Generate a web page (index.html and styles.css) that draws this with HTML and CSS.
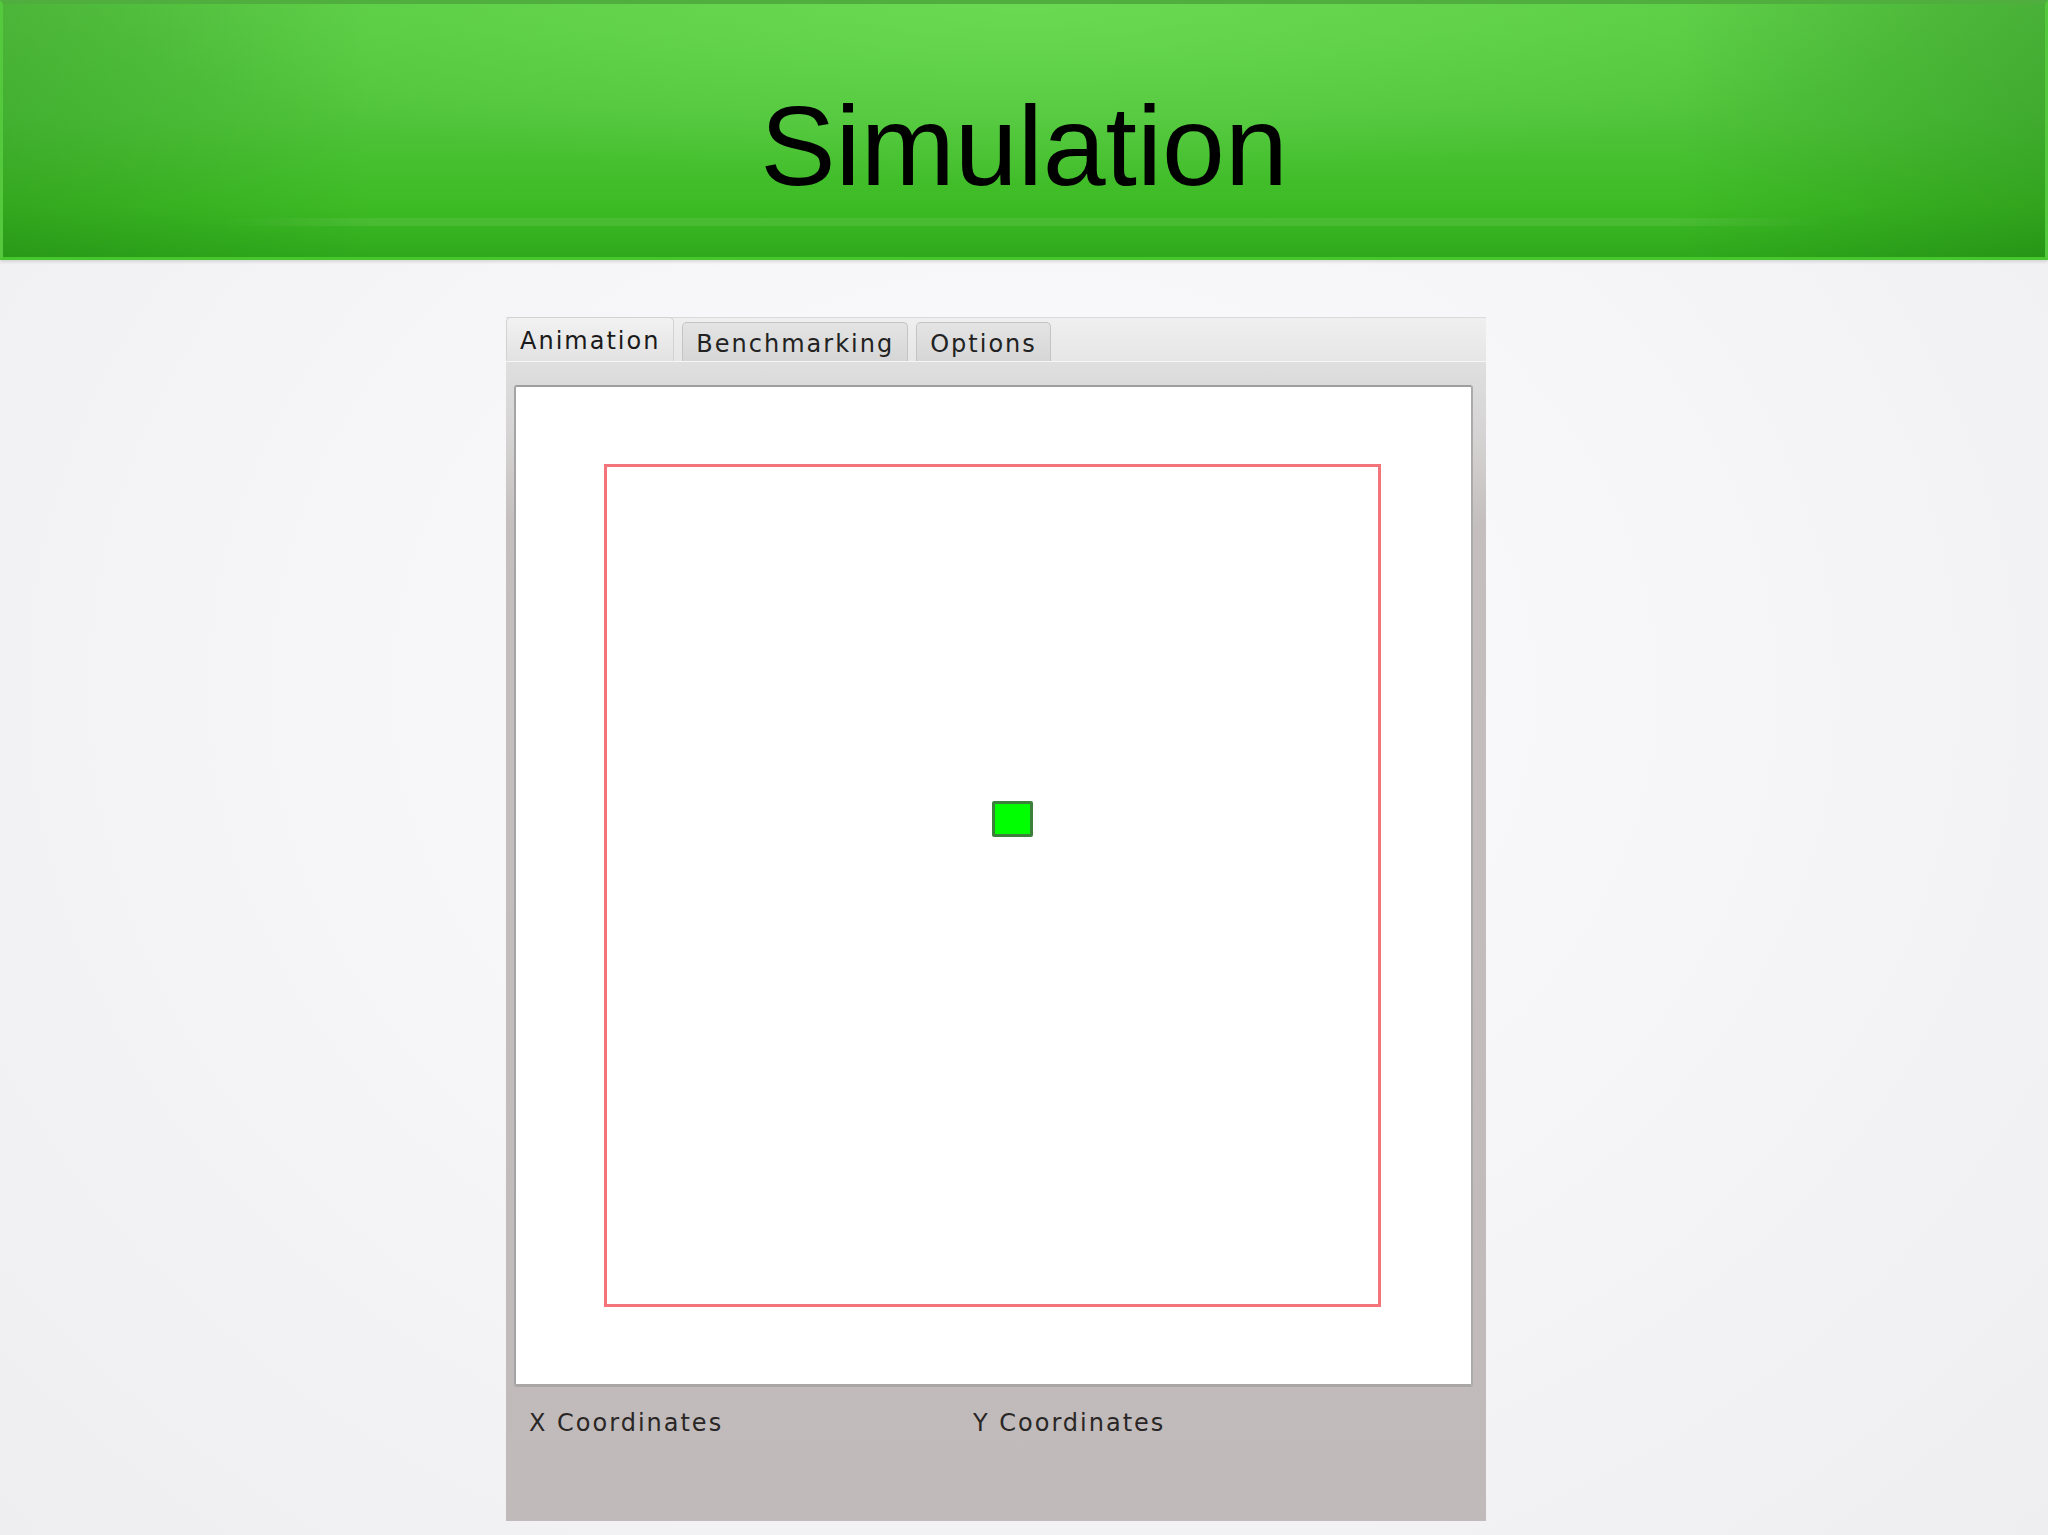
FILE: index.html
```html
<!DOCTYPE html>
<html>
<head>
<meta charset="utf-8">
<title>Simulation</title>
<link rel="stylesheet" href="styles.css">
</head>
<body>
<header class="banner">
  <h1 class="title">Simulation</h1>
  <div class="banner-sheen"></div>
</header>
<main class="stage">
  <section class="tabwidget">
    <nav class="tabbar">
      <div class="tab tab-active">Animation</div>
      <div class="tab">Benchmarking</div>
      <div class="tab">Options</div>
    </nav>
    <div class="pane">
      <div class="canvas">
        <div class="arena">
          <div class="particle"></div>
        </div>
      </div>
      <div class="coords">
        <span class="coord">X Coordinates</span>
        <span class="coord">Y Coordinates</span>
      </div>
    </div>
  </section>
</main>
</body>
</html>
```
FILE: styles.css
```css
html, body {
  margin: 0;
  padding: 0;
}
body {
  width: 2048px;
  height: 1535px;
  overflow: hidden;
  background: radial-gradient(ellipse at 50% 45%, #fefefe 0%, #f7f6f8 40%, #eeedf0 100%);
  font-family: "DejaVu Sans", Verdana, sans-serif;
}
.banner {
  box-sizing: border-box;
  height: 260px;
  border-top: 4px solid #4fae3d;
  border-bottom: 3px solid #46c82c;
  border-left: 3px solid #55c93e;
  border-right: 3px solid #55c93e;
  background:
    linear-gradient(to right, rgba(0, 70, 0, 0.16) 0%, rgba(0, 70, 0, 0) 18%, rgba(0, 70, 0, 0) 82%, rgba(0, 70, 0, 0.2) 100%),
    radial-gradient(ellipse 45% 70% at 50% 0%, rgba(120, 230, 95, 0.55) 0%, rgba(120, 230, 95, 0) 100%),
    linear-gradient(to bottom, #5acb44 0%, #4fc43a 45%, #3dbb24 80%, #2fa91c 100%);
  box-shadow: 0 2px 3px rgba(0, 0, 0, 0.12);
  display: flex;
  flex-direction: column;
  align-items: center;
}
.title {
  margin: 86px 0 0 0;
  font-family: "Liberation Sans", Arial, sans-serif;
  font-weight: normal;
  font-size: 113px;
  line-height: 113px;
  color: #000;
}
.banner-sheen {
  margin-top: 15px;
  width: 1625px;
  height: 8px;
  background: linear-gradient(to right, rgba(255, 255, 255, 0), rgba(255, 255, 255, 0.08) 10%, rgba(255, 255, 255, 0.08) 90%, rgba(255, 255, 255, 0));
}
.stage {
  padding: 57px 0 0 506px;
}
.tabwidget {
  width: 980px;
}
.tabbar {
  box-sizing: border-box;
  height: 44px;
  border-top: 1px solid #dadada;
  background: linear-gradient(to bottom, #efefef 0%, #e6e6e6 100%);
  display: flex;
  align-items: flex-end;
  gap: 8px;
}
.tab {
  box-sizing: border-box;
  height: 39px;
  padding: 2px 13px 0 13px;
  border: 1px solid #c4c4c4;
  border-bottom: none;
  border-radius: 5px 5px 0 0;
  background: linear-gradient(to bottom, #e4e4e4 0%, #d6d6d6 100%);
  font-size: 24px;
  letter-spacing: 2px;
  line-height: 38px;
  color: #222;
  white-space: nowrap;
}
.tab-active {
  height: 44px;
  margin-top: -1px;
  padding-top: 4px;
  border-color: #d2d2d2;
  background: linear-gradient(to bottom, #f2f2f2 0%, #e2e2e2 100%);
  color: #1a1a1a;
}
.pane {
  box-sizing: border-box;
  height: 1160px;
  border-top: 1px solid #f6f6f6;
  padding: 23px 13px 0 8px;
  background: linear-gradient(to bottom, #dfdfdf 0%, #d6d4d4 6%, #c4bfbe 14%, #c0bbba 100%);
}
.canvas {
  box-sizing: border-box;
  height: 1002px;
  background: #fff;
  border-top: 2px solid #9e9e9e;
  border-left: 2px solid #a4a4a4;
  border-right: 2px solid #ababab;
  border-bottom: 3px solid #aaa6a5;
  border-radius: 3px;
  padding: 77px 0 0 88px;
}
.arena {
  position: relative;
  box-sizing: border-box;
  width: 777px;
  height: 843px;
  border: 3px solid #f4747c;
}
.particle {
  position: absolute;
  left: 385px;
  top: 334px;
  box-sizing: border-box;
  width: 41px;
  height: 36px;
  background: #00ff00;
  border: 3px solid #3d7f3d;
  border-radius: 2px;
}
.coords {
  display: grid;
  grid-template-columns: 444px auto;
  padding: 22px 0 0 15px;
}
.coord {
  font-size: 24px;
  letter-spacing: 2px;
  line-height: 28px;
  color: #2a2626;
  white-space: nowrap;
}
```
